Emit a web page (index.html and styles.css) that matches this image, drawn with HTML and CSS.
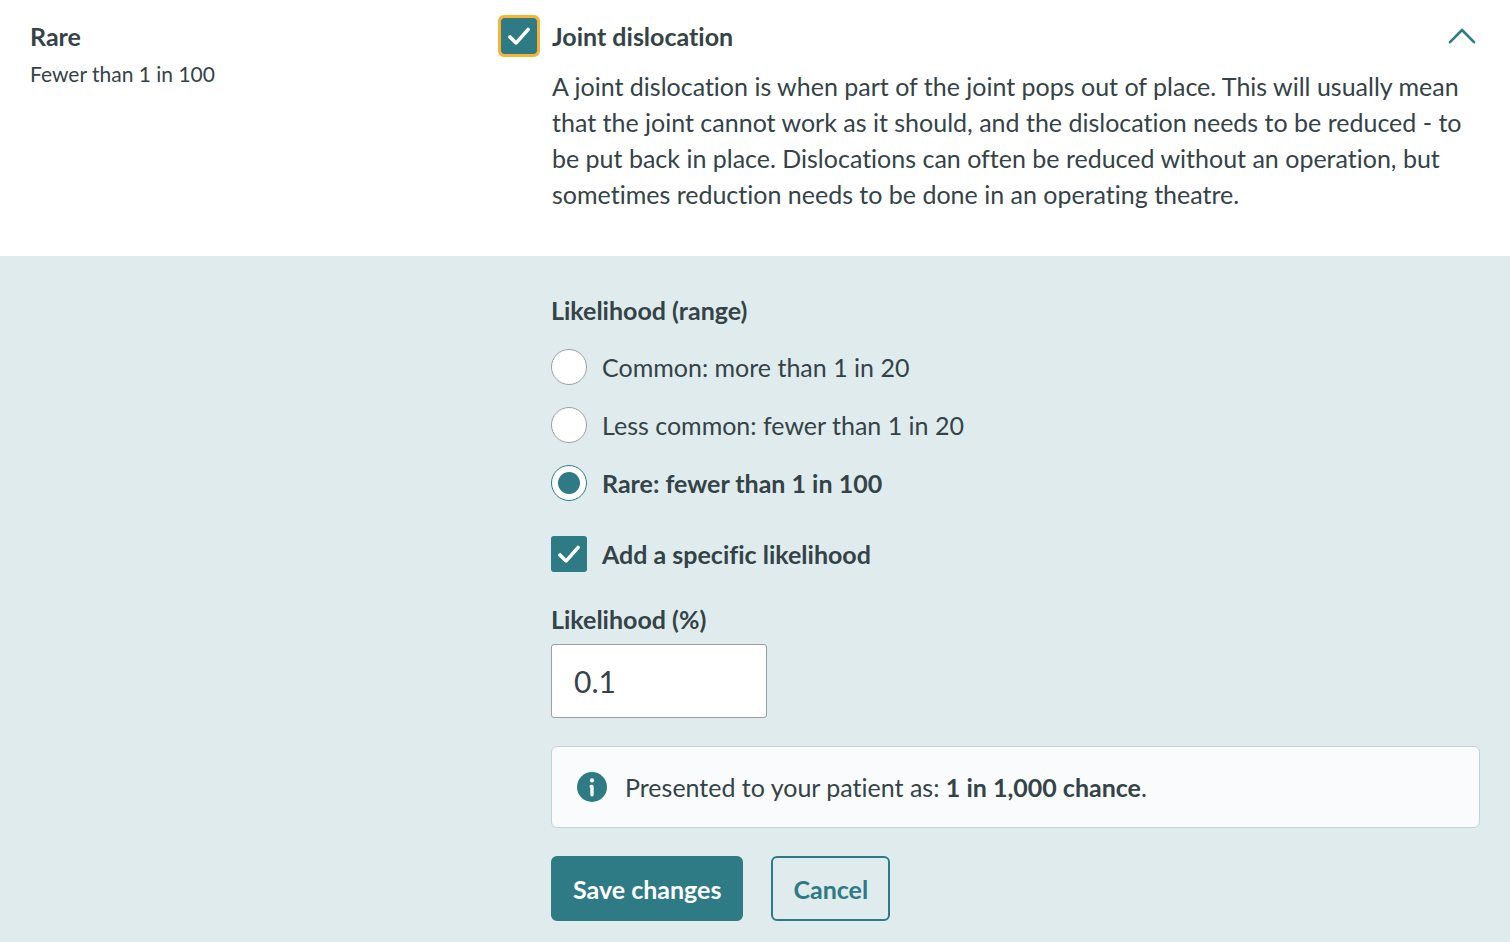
FILE: index.html
```html
<!DOCTYPE html>
<html lang="en">
<head>
  <meta charset="UTF-8">
  <title>Joint dislocation</title>
  <link rel="stylesheet" href="styles.css">
</head>
<body>
<form class="risk">
  <section class="risk-summary">
    <div class="frequency">
      <h2>Rare</h2>
      <p>Fewer than 1 in 100</p>
    </div>

    <div class="risk-detail">
      <div class="risk-title">
        <label class="choice selected">
          <input type="checkbox" class="focused" checked>
          <span>Joint dislocation</span>
        </label>
        <button type="button" class="toggle" aria-label="Collapse">
          <svg width="28" height="18" viewBox="0 0 28 18" fill="none" stroke="currentColor" stroke-width="2.6" stroke-linecap="round" stroke-linejoin="round">
            <path d="M2 15.2 14 3l12 12.2"/>
          </svg>
        </button>
      </div>
      <p class="description">A joint dislocation is when part of the joint pops out of place. This will usually mean that the joint cannot work as it should, and the dislocation needs to be reduced - to be put back in place. Dislocations can often be reduced without an operation, but sometimes reduction needs to be done in an operating theatre.</p>
    </div>
  </section>

  <section class="risk-edit">
    <fieldset>
      <legend>Likelihood (range)</legend>
      <label class="choice">
        <input type="radio" name="range">
        <span>Common: more than 1 in 20</span>
      </label>
      <label class="choice">
        <input type="radio" name="range">
        <span>Less common: fewer than 1 in 20</span>
      </label>
      <label class="choice selected">
        <input type="radio" name="range" checked>
        <span>Rare: fewer than 1 in 100</span>
      </label>
    </fieldset>

    <label class="choice selected">
      <input type="checkbox" checked>
      <span>Add a specific likelihood</span>
    </label>

    <div class="field">
      <label for="percent">Likelihood (%)</label>
      <input type="text" id="percent" value="0.1">
    </div>

    <div class="info">
      <svg width="30" height="30" viewBox="0 0 30 30">
        <circle cx="15" cy="15" r="15" fill="#2e7a85"/>
        <circle cx="15" cy="8.4" r="2.1" fill="#f9fbfc"/>
        <path d="M14.2 14.4h.8v8.4" fill="none" stroke="#f9fbfc" stroke-width="3.4" stroke-linecap="round" stroke-linejoin="round"/>
      </svg>
      <p>Presented to your patient as: <strong>1 in 1,000 chance</strong>.</p>
    </div>

    <div class="actions">
      <button type="button" class="btn btn-primary">Save changes</button>
      <button type="button" class="btn">Cancel</button>
    </div>
  </section>
</form>
</body>
</html>
```
FILE: styles.css
```css
* {
  box-sizing: border-box;
  margin: 0;
  padding: 0;
}

body {
  background-color: #fff;
  color: #344347;
  font-family: Lato, "Liberation Sans", sans-serif;
  font-size: 25px;
  line-height: 36px;
  font-variant-ligatures: none;
}

.risk {
  display: flex;
  flex-direction: column;
  min-height: 100vh;
}

.risk-summary {
  display: grid;
  grid-template-columns: 471px 1fr;
  padding: 18px 30px 44px;
}

h2 {
  font-size: 25px;
  font-weight: bold;
}

.frequency p {
  margin-top: 2px;
  font-size: 21px;
}

.risk-title {
  display: flex;
  justify-content: space-between;
  align-items: center;
}

.description {
  margin-top: 14px;
  padding-left: 51px;
}

.choice {
  display: flex;
  align-items: center;
  gap: 15px;
}

.selected,
legend,
.field label {
  font-weight: bold;
}

.choice input {
  appearance: none;
  display: grid;
  place-items: center;
  flex: none;
  width: 36px;
  height: 36px;
}

.choice input[type="checkbox"] {
  border-radius: 3px;
  background-color: #2e7a85;
}

.choice input[type="checkbox"]::before {
  content: "";
  width: 24px;
  height: 20px;
  background-color: #fff;
  clip-path: path("M3.5 9 L9 14.5 L20.5 1.5 Q23 1.5 23 4 L10.5 18 Q9 19.5 7.5 18 L1 11.5 Q1 9 3.5 9 Z");
}

.choice input.focused {
  outline: 3px solid #f6b432;
}

.choice input[type="radio"] {
  border: 1px solid #9a9fa3;
  border-radius: 50%;
  background-color: #fff;
}

.choice input[type="radio"]:checked {
  border-color: #2e7a85;
}

.choice input[type="radio"]:checked::before {
  content: "";
  width: 22px;
  height: 22px;
  border-radius: 50%;
  background-color: #2e7a85;
}

.toggle {
  display: flex;
  margin-right: 4px;
  border: none;
  background: none;
  color: #2e7a85;
  cursor: pointer;
}

.risk-edit {
  flex: 1;
  padding: 36px 30px 21px 551px;
  background-color: #e0ebed;
}

fieldset {
  border: none;
  margin-bottom: 35px;
}

legend {
  margin-bottom: 21px;
}

fieldset .choice + .choice {
  margin-top: 22px;
}

.field {
  margin-top: 29px;
}

.field label {
  display: block;
  margin-bottom: 7px;
}

.field input {
  display: block;
  width: 216px;
  height: 74px;
  padding: 0 22px;
  border: 1px solid #9a9fa3;
  border-radius: 3px;
  background-color: #fff;
  color: inherit;
  font-family: inherit;
  font-size: 30px;
}

.info {
  display: flex;
  align-items: center;
  gap: 18px;
  margin: 28px 0;
  padding: 22px 25px;
  border: 1px solid #bfd4d9;
  border-radius: 6px;
  background-color: #f9fbfc;
}

.actions {
  display: flex;
  gap: 28px;
}

.btn {
  height: 65px;
  padding: 0 20px;
  border: 2px solid #2e7a85;
  border-radius: 6px;
  background: none;
  color: #2e7a85;
  font-family: inherit;
  font-size: 25px;
  font-weight: bold;
  cursor: pointer;
}

.btn-primary {
  background-color: #2e7a85;
  color: #fff;
}
```
